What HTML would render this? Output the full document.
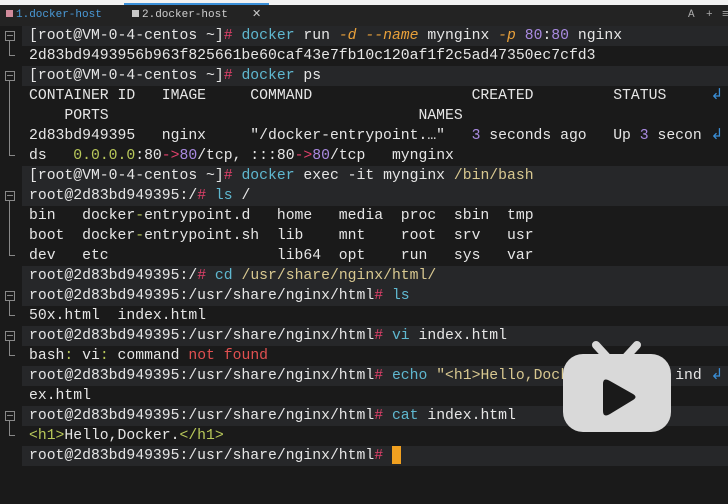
<!DOCTYPE html>
<html><head><meta charset="utf-8"><style>
*{margin:0;padding:0;box-sizing:border-box}
body{width:728px;height:504px;background:#1a1a1a;overflow:hidden;position:relative;font-family:"Liberation Mono",monospace;color:#e6e6e6}
.top{position:absolute;left:0;top:0;width:728px;height:5px;background:#f2f2f2}
.top i{position:absolute;left:124px;top:3px;width:145px;height:2px;background:#3a8fd8}
.tabs{position:absolute;left:0;top:5px;width:728px;height:21px;background:#232323;font-size:11px;line-height:21px}
.tabs span{position:absolute}
.sq{display:inline-block;width:7px;height:7px;background:#d08a9a;margin-right:3px}
.ln{position:absolute;left:29px;height:20px;line-height:20px;font-size:14.75px;white-space:pre}
.hl{position:absolute;left:22px;width:706px;height:20px;background:#262729}
.c{color:#5fb8d0}.r{color:#e0406a}.o{color:#e8a03a;font-style:italic}.p{color:#a98ae0}.g{color:#b8c85a}.e{color:#e05050}.w{color:#3a8fd8}.t{color:#d8c890}
.f{position:absolute;left:5px;width:10px;height:10px;border:1px solid #888}
.f:after{content:"";position:absolute;left:1px;top:3px;width:6px;height:1px;background:#888}
.v{position:absolute;left:9px;width:1px;background:#888}
.h{position:absolute;left:9px;width:6px;height:1px;background:#888}
</style></head><body>
<div class="top"><i></i></div>
<div class="tabs">
<span style="left:6px;color:#4a9ad8"><b class="sq"></b>1.docker-host</span>
<span style="left:132px;color:#cfcfcf"><b class="sq" style="background:#c8c8c8"></b>2.docker-host</span>
<span style="left:252px;color:#ccc">✕</span>
<span style="left:688px;color:#aaa">A</span><span style="left:706px;color:#aaa">+</span><span style="left:722px;color:#aaa">≡</span>
</div>
<div class="hl" style="top:26px"></div><div class="hl" style="top:66px"></div>
<div class="hl" style="top:166px"></div><div class="hl" style="top:186px"></div>
<div class="hl" style="top:266px"></div><div class="hl" style="top:286px"></div>
<div class="hl" style="top:326px"></div><div class="hl" style="top:366px"></div>
<div class="hl" style="top:406px"></div><div class="hl" style="top:446px"></div>

<div class="f" style="top:31px"></div><div class="v" style="top:41px;height:14px"></div><div class="h" style="top:55px"></div>
<div class="f" style="top:71px"></div><div class="v" style="top:81px;height:74px"></div><div class="h" style="top:155px"></div>
<div class="f" style="top:191px"></div><div class="v" style="top:201px;height:54px"></div><div class="h" style="top:255px"></div>
<div class="f" style="top:291px"></div><div class="v" style="top:301px;height:14px"></div><div class="h" style="top:315px"></div>
<div class="f" style="top:331px"></div><div class="v" style="top:341px;height:14px"></div><div class="h" style="top:355px"></div>
<div class="f" style="top:411px"></div><div class="v" style="top:421px;height:14px"></div><div class="h" style="top:435px"></div>

<div class="ln" style="top:26px">[root@VM-0-4-centos ~]<span class="r">#</span> <span class="c">docker</span> run <span class="o">-d</span> <span class="o">--name</span> mynginx <span class="o">-p</span> <span class="p">80</span>:<span class="p">80</span> nginx</div>
<div class="ln" style="top:46px">2d83bd9493956b963f825661be60caf43e7fb10c120af1f2c5ad47350ec7cfd3</div>
<div class="ln" style="top:66px">[root@VM-0-4-centos ~]<span class="r">#</span> <span class="c">docker</span> ps</div>
<div class="ln" style="top:86px">CONTAINER ID   IMAGE     COMMAND                  CREATED         STATUS     <span class="w">↲</span></div>
<div class="ln" style="top:106px">    PORTS                                   NAMES</div>
<div class="ln" style="top:126px">2d83bd949395   nginx     "/docker-entrypoint.…"   <span class="p">3</span> seconds ago   Up <span class="p">3</span> secon <span class="w">↲</span></div>
<div class="ln" style="top:146px">ds   <span class="g">0.0.0.0</span>:80<span class="r">-&gt;</span><span class="p">80</span>/tcp, :::80<span class="r">-&gt;</span><span class="p">80</span>/tcp   mynginx</div>
<div class="ln" style="top:166px">[root@VM-0-4-centos ~]<span class="r">#</span> <span class="c">docker</span> exec -it mynginx <span class="t">/bin/bash</span></div>
<div class="ln" style="top:186px">root@2d83bd949395:/<span class="r">#</span> <span class="c">ls</span> /</div>
<div class="ln" style="top:206px">bin   docker<span class="g">-</span>entrypoint.d   home   media  proc  sbin  tmp</div>
<div class="ln" style="top:226px">boot  docker<span class="g">-</span>entrypoint.sh  lib    mnt    root  srv   usr</div>
<div class="ln" style="top:246px">dev   etc                   lib64  opt    run   sys   var</div>
<div class="ln" style="top:266px">root@2d83bd949395:/<span class="r">#</span> <span class="c">cd</span> <span class="t">/usr/share/nginx/html/</span></div>
<div class="ln" style="top:286px">root@2d83bd949395:/usr/share/nginx/html<span class="r">#</span> <span class="c">ls</span></div>
<div class="ln" style="top:306px">50x.html  index.html</div>
<div class="ln" style="top:326px">root@2d83bd949395:/usr/share/nginx/html<span class="r">#</span> <span class="c">vi</span> index.html</div>
<div class="ln" style="top:346px">bash<span class="g">:</span> vi<span class="g">:</span> command <span class="e">not found</span></div>
<div class="ln" style="top:366px">root@2d83bd949395:/usr/share/nginx/html<span class="r">#</span> <span class="c">echo</span> <span class="t">"&lt;h1&gt;Hello,Docker.&lt;/h1&gt;"</span> <span class="r">&gt;</span> ind <span class="w">↲</span></div>
<div class="ln" style="top:386px">ex.html</div>
<div class="ln" style="top:406px">root@2d83bd949395:/usr/share/nginx/html<span class="r">#</span> <span class="c">cat</span> index.html</div>
<div class="ln" style="top:426px"><span class="g">&lt;h1&gt;</span>Hello,Docker.<span class="g">&lt;/h1&gt;</span></div>
<div class="ln" style="top:446px">root@2d83bd949395:/usr/share/nginx/html<span class="r">#</span> <span style="display:inline-block;width:9px;height:18px;background:#f0a020;vertical-align:middle"></span></div>

<svg style="position:absolute;left:560px;top:338px" width="120" height="100" viewBox="0 0 120 100">
<g fill="#d9d9d9">
<line x1="36" y1="7" x2="47" y2="19" stroke="#d9d9d9" stroke-width="8" stroke-linecap="round"/>
<line x1="77" y1="7" x2="66" y2="19" stroke="#d9d9d9" stroke-width="8" stroke-linecap="round"/>
<rect x="3" y="16" width="108" height="78" rx="20"/>
</g>
<path d="M43 46 Q43 39 50 43 L73 56 Q78 59 73 62 L50 76 Q43 80 43 73 Z" fill="#1a1a1a"/>
</svg>
</body></html>
